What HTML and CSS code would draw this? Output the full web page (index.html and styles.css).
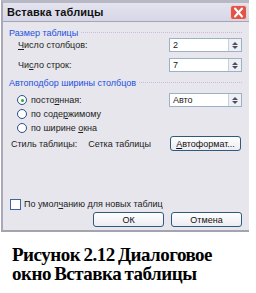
FILE: index.html
```html
<!DOCTYPE html>
<html lang="ru">
<head>
<meta charset="utf-8">
<link rel="stylesheet" href="styles.css">
</head>
<body>
<div class="dialog">
  <div class="titlebar">
    <span class="title">Вставка таблицы</span>
    <span class="close"><svg width="17" height="15" viewBox="0 0 17 15"><rect x="0.5" y="0.5" width="16" height="14" rx="2.5" fill="#e0554a" stroke="#f3d0cc"/><path d="M5 3.5 L12 11.5 M12 3.5 L5 11.5" stroke="#fff" stroke-width="2" stroke-linecap="round"/></svg></span>
  </div>
  <div class="content">
    <div class="group-title g1"><span>Размер таблицы</span><i class="rule"></i></div>
    <div class="row r1">
      <span class="label"><u>Ч</u>исло столбцов:</span>
      <span class="field"><span class="val">2</span><span class="spin"><i class="up"></i><i class="dn"></i></span></span>
    </div>
    <div class="row r2">
      <span class="label">Чи<u>с</u>ло строк:</span>
      <span class="field"><span class="val">7</span><span class="spin"><i class="up"></i><i class="dn"></i></span></span>
    </div>
    <div class="group-title g2"><span>Автоподбор ширины столбцов</span><i class="rule"></i></div>
    <div class="row r3">
      <span class="radio-label"><span class="radio on"></span><span>посто<u>я</u>нная:</span></span>
      <span class="field"><span class="val">Авто</span><span class="spin"><i class="up"></i><i class="dn"></i></span></span>
    </div>
    <div class="row r4"><span class="radio-label"><span class="radio"></span><span>по соде<u>р</u>жимому</span></span></div>
    <div class="row r5"><span class="radio-label"><span class="radio"></span><span>по ширине <u>о</u>кна</span></span></div>
    <div class="row r6">
      <span class="style-label">Стиль таблицы:<span class="style-val">Сетка таблицы</span></span>
      <span class="btn wide"><span><u>А</u>втоформат...</span></span>
    </div>
    <div class="row r7"><span class="check-label"><span class="check"></span><span>По умол<u>ч</u>анию для новых таблиц</span></span></div>
    <div class="row r8">
      <span class="btn">ОК</span>
      <span class="btn">Отмена</span>
    </div>
  </div>
</div>
<div class="caption">Рисунок 2.12 Диалоговое<br>окно Вставка таблицы</div>
</body>
</html>
```
FILE: styles.css
```css
html, body { margin: 0; padding: 0; background: #fff; }
body { width: 256px; height: 293px; overflow: hidden; }
.dialog {
  width: 248px;
  margin-left: 1px;
  height: 232px;
  border-top: 3px solid #b8b8c4;
  border-left: 2px solid #a8a8b8;
  border-bottom: 2px solid #a4a4b0;
  background: #e6e6ec;
  font-family: "Liberation Sans", Arial, sans-serif;
  font-size: 9px;
  color: #222;
  box-sizing: border-box;
  overflow: hidden;
}
.titlebar {
  height: 18px;
  display: flex;
  align-items: center;
  justify-content: space-between;
  padding: 0 2px 0 4px;
  background: linear-gradient(#e4e4f0, #d6d6e6);
  border-bottom: 1px solid #a4a4b4;
}
.title { font-size: 11px; font-weight: bold; color: #111; letter-spacing: 0.1px; }
.close { display: flex; }
.content { padding: 0 7px 0 0; }
.group-title {
  display: flex; align-items: center; gap: 3px;
  color: #1d50e0; padding-left: 6px; height: 11px;
}
.group-title .rule { flex: 1; border-top: 1px dotted #d0b8dc; }
.g1 { margin-top: 5px; }
.g2 { margin-top: 5px; }
.row { display: flex; align-items: center; justify-content: space-between; }
.label { padding-left: 15px; }
.field {
  width: 73px; height: 14px; box-sizing: border-box;
  border: 1px solid #9cb0c8; background: #fff;
  display: flex; align-items: center; justify-content: space-between;
}
.val { padding-left: 3px; }
.spin {
  width: 12px; height: 12px; display: flex; flex-direction: column;
  align-items: center; justify-content: center; gap: 1px;
  background: #eef0f4; border-left: 1px solid #c8d0dc;
}
.spin i { width: 0; height: 0; border-left: 3px solid transparent; border-right: 3px solid transparent; }
.spin .up { border-bottom: 3px solid #4a5060; }
.spin .dn { border-top: 3px solid #4a5060; }
.r1 { margin-top: 0; height: 14px; }
.r2 { margin-top: 6px; height: 14px; }
.r3 { margin-top: 5px; height: 14px; }
.r4 { margin-top: 0px; height: 14px; }
.r5 { margin-top: 0px; height: 14px; }
.r6 { margin-top: 1px; height: 15px; }
.r7 { margin-top: 47px; height: 12px; }
.r8 { margin-top: 2px; height: 15px; justify-content: flex-end; gap: 7px; }
.radio-label { display: flex; align-items: center; padding-left: 14px; gap: 4px; }
.radio {
  width: 10px; height: 10px; border-radius: 50%; box-sizing: border-box;
  border: 1px solid #2a4e8c; background: #fff; position: relative;
}
.radio.on::after {
  content: ""; position: absolute; left: 2.5px; top: 2.5px; width: 3px; height: 3px;
  border-radius: 50%; background: #28b028;
}
.style-label { padding-left: 8px; }
.style-val { margin-left: 11px; }
.btn {
  width: 71px; height: 15px; box-sizing: border-box;
  border: 1px solid #2f5a7c; border-radius: 3px;
  background: linear-gradient(#ffffff, #ececf2);
  display: flex; align-items: center; justify-content: center;
  color: #111;
}
.btn.wide { margin-right: 1px; }
.check-label { display: flex; align-items: center; gap: 3px; padding-left: 7px; }
.check { width: 11px; height: 11px; box-sizing: border-box; border: 1px solid #3c64a0; background: #fff; }
u { text-decoration: underline; text-underline-offset: 1px; }
.caption {
  margin: 13px 0 0 12px;
  font-family: "Liberation Serif", "Times New Roman", serif;
  font-weight: bold;
  font-size: 19px;
  line-height: 19px;
  letter-spacing: -0.5px;
  word-spacing: -1px;
  color: #000;
}
```
